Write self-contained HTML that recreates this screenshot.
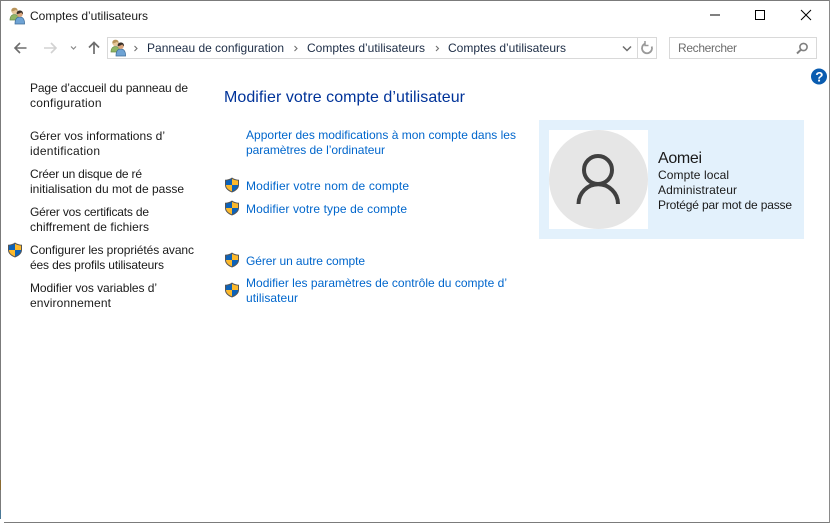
<!DOCTYPE html>
<html lang="fr"><head><meta charset="utf-8"><title>Comptes d’utilisateurs</title>
<style>
html,body{margin:0;padding:0;background:#fff;width:830px;height:523px;overflow:hidden}
svg{display:block}
text{font-family:"Liberation Sans",sans-serif;font-size:12px;fill:#1a1a1a}
.n{fill:#1c2c45}
.l{fill:#0066cc}
.h{fill:#003399;font-size:16px}
</style></head><body>
<svg width="830" height="523" viewBox="0 0 830 523" xmlns="http://www.w3.org/2000/svg">
<defs>
<g id="s">
<path d="M8 .5C6 2 3.500 2.600 1 2.800V8c0 3.500 3 6 7 7.500 4-1.500 7-4 7-7.500V2.800C12.500 2.600 10 2 8 .5z" fill="#555"/>
<path d="M8 1.700v6.300H2V3.600C4.300 3.400 6.400 2.800 8 1.700z" fill="#0d62b8"/>
<path d="M8 1.700c1.600 1.100 3.700 1.700 6 1.900V8H8z" fill="#fdb92b"/>
<path d="M2 8h6v6.400C4.700 13.100 2 11 2 8z" fill="#fdb92b"/>
<path d="M8 8h6c0 3-2.700 5.100-6 6.400z" fill="#0d62b8"/>
</g>
<g id="u">
<path d="M1 13c0-3.500 1.800-5.500 4.500-5.500s4.500 2 4.500 5.500z" fill="#8fb565" stroke="#6a8c48" stroke-width=".7"/>
<circle cx="5.500" cy="4.200" r="3" fill="#e6c79c"/>
<path d="M2.400 4.500C2 2 3.500.8 5.500.8S9 2 8.600 4.500C7.800 3.800 7.300 3 7 2.700 6 3.700 4 4 2.400 4.500z" fill="#b8935a"/>
<path d="M6 17c0-4.500 1.800-7 4.800-7s4.800 2.500 4.800 7z" fill="#6ea3d4" stroke="#3f6d99" stroke-width=".7"/>
<circle cx="10.800" cy="7" r="3" fill="#d9a47c"/>
<path d="M7.700 7.300C7.300 4.800 8.800 3.500 10.800 3.500s3.500 1.300 3.100 3.800c-.8-.6-1.400-1.400-1.700-1.900-1 .9-2.700 1.500-4.500 1.900z" fill="#3a3028"/>
</g>
</defs>
<rect width="830" height="523" fill="#fff"/>
<rect x="0" y="0" width="830" height="1" fill="#7b7b7b"/>
<rect x="0" y="0" width="1" height="519" fill="#7b7b7b"/>
<rect x="0" y="480" width="1" height="10" fill="#8a6a30"/>
<rect x="0" y="510" width="1" height="9" fill="#4a7896"/>
<rect x="4" y="522" width="826" height="1" fill="#7b7b7b"/>
<rect x="829" y="0" width="1" height="523" fill="#8a8a8a"/>

<use href="#u" x="9" y="7"/>
<text x="30" y="20" textLength="118">Comptes d’utilisateurs</text>

<path d="M710 15h10" stroke="#000" stroke-width="1"/>
<rect x="755.500" y="10.500" width="9" height="9" fill="none" stroke="#000"/>
<path d="M801 10l10 10M811 10l-10 10" stroke="#000" stroke-width="1" fill="none"/>

<path d="M26.500 48H15.500M20 43l-5 5 5 5" fill="none" stroke="#6d6d6d" stroke-width="1.600"/>
<path d="M44 48H55M51 43l5 5-5 5" fill="none" stroke="#d2d2d2" stroke-width="1.600"/>
<path d="M71 46.500l2.500 2.500 2.500-2.500" fill="none" stroke="#8a8a8a" stroke-width="1.200"/>
<path d="M94 54V42.500M89 47.500l5-5 5 5" fill="none" stroke="#6d6d6d" stroke-width="1.700"/>

<rect x="107.500" y="37.500" width="549" height="21" fill="#fff" stroke="#d9d9d9"/>
<path d="M637.500 38v20" stroke="#d9d9d9"/>
<use href="#u" x="110" y="39"/>
<path d="M134.500 46l2.500 2.500-2.500 2.500M294.500 46l2.500 2.500-2.500 2.500M436 46l2.500 2.500-2.500 2.500" fill="none" stroke="#707070" stroke-width="1.100"/>
<text class="n" x="147" y="52" textLength="137">Panneau de configuration</text>
<text class="n" x="307" y="52" textLength="118">Comptes d’utilisateurs</text>
<text class="n" x="448" y="52" textLength="118">Comptes d’utilisateurs</text>
<path d="M623 46.500l4 4 4-4" fill="none" stroke="#6d6d6d" stroke-width="1.500"/>
<path d="M651.700 46.500a5 5 0 1 1-6.800-2.800" fill="none" stroke="#999" stroke-width="1.800"/>
<path d="M645 41v4.500h3.500" fill="none" stroke="#999" stroke-width="1.500"/>

<rect x="669.500" y="37.500" width="147" height="21" fill="#fff" stroke="#d9d9d9"/>
<text x="678" y="52" textLength="59" style="fill:#6d6d6d">Rechercher</text>
<circle cx="803.500" cy="47" r="3.600" fill="none" stroke="#808080" stroke-width="1.600"/>
<path d="M800.800 49.800l-3.800 3.700" stroke="#808080" stroke-width="2"/>

<circle cx="819" cy="76.500" r="8" fill="#0a5cb0"/>
<text x="815.200" y="81.500" style="fill:#fff;font-size:13.500px;font-weight:bold">?</text>

<text x="30" y="92" textLength="158">Page d’accueil du panneau de</text>
<text x="30" y="107" textLength="71.500">configuration</text>
<text x="30" y="140" textLength="135">Gérer vos informations d’</text>
<text x="30" y="155" textLength="70">identification</text>
<text x="30" y="178" textLength="112">Créer un disque de ré</text>
<text x="30" y="193" textLength="154">initialisation du mot de passe</text>
<text x="30" y="216" textLength="119">Gérer vos certificats de</text>
<text x="30" y="231" textLength="119">chiffrement de fichiers</text>
<use href="#s" x="7" y="242"/>
<text x="30" y="254" textLength="164">Configurer les propriétés avanc</text>
<text x="30" y="269" textLength="134">ées des profils utilisateurs</text>
<text x="30" y="292" textLength="127">Modifier vos variables d’</text>
<text x="30" y="307" textLength="81">environnement</text>

<text class="h" x="224" y="102" textLength="241">Modifier votre compte d’utilisateur</text>
<text class="l" x="246" y="139" textLength="270">Apporter des modifications à mon compte dans les</text>
<text class="l" x="246" y="154" textLength="139">paramètres de l’ordinateur</text>
<use href="#s" x="224" y="177"/>
<text class="l" x="246" y="190" textLength="163">Modifier votre nom de compte</text>
<use href="#s" x="224" y="200"/>
<text class="l" x="246" y="213" textLength="161">Modifier votre type de compte</text>
<use href="#s" x="224" y="252"/>
<text class="l" x="246" y="265" textLength="119">Gérer un autre compte</text>
<use href="#s" x="224" y="282"/>
<text class="l" x="246" y="287" textLength="261">Modifier les paramètres de contrôle du compte d’</text>
<text class="l" x="246" y="302" textLength="52">utilisateur</text>

<rect x="539" y="120" width="265" height="119" fill="#e3f1fc"/>
<rect x="549" y="130" width="99" height="99" fill="#fff"/>
<circle cx="598.500" cy="179.500" r="49.500" fill="#e6e6e6"/>
<circle cx="598" cy="170" r="14" fill="none" stroke="#404040" stroke-width="4"/>
<path d="M578.500 204a19.500 19.500 0 0 1 39.500 0" fill="none" stroke="#404040" stroke-width="4"/>
<text x="658" y="163" textLength="44" style="font-size:16px">Aomei</text>
<text x="658" y="179" textLength="71">Compte local</text>
<text x="658" y="194" textLength="79">Administrateur</text>
<text x="658" y="209" textLength="134">Protégé par mot de passe</text>
</svg>
</body></html>
